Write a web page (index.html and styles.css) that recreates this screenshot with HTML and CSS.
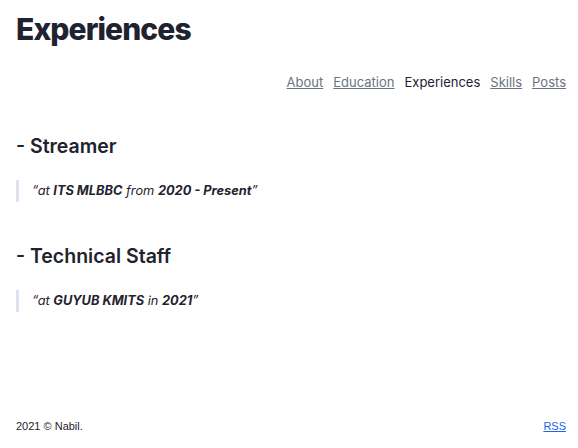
FILE: index.html
```html
<!DOCTYPE html>
<html lang="en">
<head>
  <meta charset="UTF-8">
  <title>Experiences</title>
  <link rel="stylesheet" href="styles.css">
</head>
<body>
<div class="page">
  <header class="header">
    <h1>Experiences</h1>
    <nav class="nav">
      <a href="#">About</a>
      <a href="#">Education</a>
      <span class="current">Experiences</span>
      <a href="#">Skills</a>
      <a href="#">Posts</a>
    </nav>
  </header>

  <main class="content">
    <h2>- Streamer</h2>
    <blockquote>
      <p>&ldquo;at <strong>ITS MLBBC</strong> from <strong>2020 - Present</strong>&rdquo;</p>
    </blockquote>

    <h2>- Technical Staff</h2>
    <blockquote>
      <p>&ldquo;at <strong>GUYUB KMITS</strong> in <strong>2021</strong>&rdquo;</p>
    </blockquote>
  </main>

  <footer class="footer">
    <span>2021 &copy; Nabil.</span>
    <a href="#">RSS</a>
  </footer>
</div>
</body>
</html>
```

FILE: styles.css
```css
body {
  margin: 0;
  font-family: Inter, "Noto Sans", sans-serif;
  color: #1f2330;
  background: #fff;
}

.page {
  padding: 0 12px 0 16px;
  min-height: 448px;
  box-sizing: border-box;
  display: flex;
  flex-direction: column;
}

h1 {
  margin: 0;
  padding-top: 10px;
  font-size: 30px;
  font-weight: 800;
  letter-spacing: -0.9px;
  line-height: 38px;
}

.nav {
  display: flex;
  justify-content: flex-end;
  gap: 10px;
  margin-top: 25px;
  font-size: 13px;
  line-height: 18px;
}

.nav a {
  color: #6b7280;
}

.nav .current {
  color: #1f2330;
}

.content {
  margin-top: 43px;
  flex: 1;
}

h2 {
  margin: 0;
  font-size: 19.5px;
  font-weight: 600;
  line-height: 24px;
}

blockquote {
  margin: 22px 0 42px;
  padding-left: 13px;
  border-left: 3px solid #dde3ee;
  font-size: 12.8px;
  font-style: italic;
  line-height: 22px;
}

blockquote p {
  margin: 0;
}

blockquote strong {
  font-weight: 700;
}

.footer {
  display: flex;
  justify-content: space-between;
  font-family: "Liberation Sans", Arial, sans-serif;
  font-size: 11px;
  padding-bottom: 16px;
}

.footer a {
  color: #2563eb;
}
```
